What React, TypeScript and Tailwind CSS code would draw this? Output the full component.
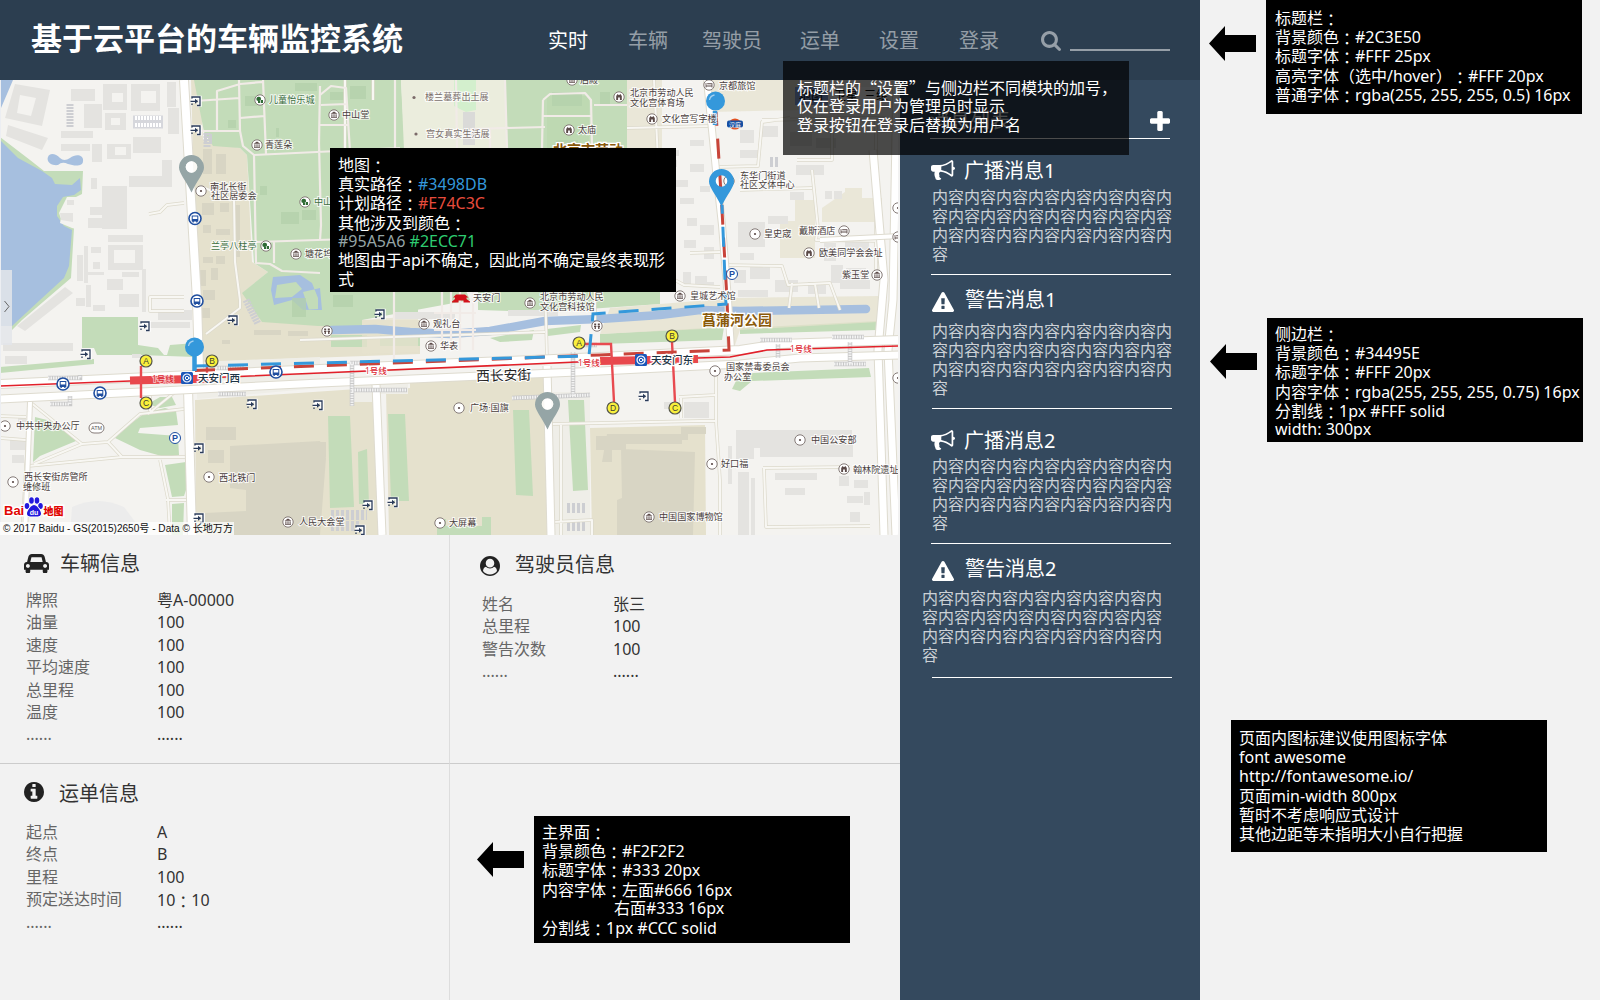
import React from "react";

/* Full-width punctuation keeps its whole cell; the colon sits centred in it */
function T({ children }: { children: string }) {
  return (
    <>
      {children.split(/([：（）“”])/).map((part, i) => {
        if (part === "：")
          return <span key={i} lang="zh-TW" className="inline-block w-[16px] translate-y-[1.5px] text-center font-['Noto_Sans_CJK_TC']">{part}</span>;
        if (/^[（）“”]$/.test(part))
          return <span key={i} lang="zh-CN" className="inline-block w-[16px] font-['Noto_Sans_CJK_SC']">{part}</span>;
        return part;
      })}
    </>
  );
}

const ICONS = {
  bullhorn:
    "M1664 640q53 0 90.5 37.5t37.5 90.5-37.5 90.5-90.5 37.5v384q0 52-38 90t-90 38q-417-347-812-380-58 19-91 66t-31 100.5 40 92.5q-20 33-23 65.5t6 58 33.5 55 48 50 61.5 50.5q-29 58-111.5 83t-168.5 11.5-132-55.5q-7-23-29.5-87.5t-32-94.5-23-89-15-101 3.5-98.5 22-110.5h-122q-66 0-113-47t-47-113v-192q0-66 47-113t113-47h480q435 0 896-384 52 0 90 38t38 90v384zm-128 604v-954q-394 302-768 343v270q377 42 768 341z",
  search:
    "M1216 832q0-185-131.5-316.5t-316.5-131.5-316.5 131.5-131.5 316.5 131.5 316.5 316.5 131.5 316.5-131.5 131.5-316.5zm512 832q0 52-38 90t-90 38q-54 0-90-38l-343-342q-179 124-399 124-143 0-273.5-55.5t-225-150-150-225-55.5-273.5 55.5-273.5 150-225 225-150 273.5-55.5 273.5 55.5 225 150 150 225 55.5 273.5q0 220-124 399l343 343q37 37 37 90z",
  plus:
    "M1600 736v192q0 40-28 68t-68 28h-416v416q0 40-28 68t-68 28h-192q-40 0-68-28t-28-68v-416h-416q-40 0-68-28t-28-68v-192q0-40 28-68t68-28h416v-416q0-40 28-68t68-28h192q40 0 68 28t28 68v416h416q40 0 68 28t28 68z",
  warning:
    "M1024 1375v-190q0-14-9.5-23.5t-22.5-9.5h-192q-13 0-22.5 9.5t-9.5 23.5v190q0 14 9.5 23.5t22.5 9.5h192q13 0 22.5-9.5t9.5-23.5zm-2-374l18-459q0-12-10-19-13-11-24-11h-220q-11 0-24 11-10 7-10 21l17 457q0 10 10 16.5t24 6.5h185q14 0 23.5-6.5t10.5-16.5zm-14-934l768 1408q35 63-2 126-17 29-46.5 46t-63.5 17h-1536q-34 0-63.5-17t-46.5-46q-37-63-2-126l768-1408q17-31 47-49t65-18 65 18 47 49z",
  info:
    "M1152 1376v-160q0-14-9-23t-23-9h-96v-512q0-14-9-23t-23-9h-320q-14 0-23 9t-9 23v160q0 14 9 23t23 9h96v320h-96q-14 0-23 9t-9 23v160q0 14 9 23t23 9h448q14 0 23-9t9-23zm-128-896v-160q0-14-9-23t-23-9h-192q-14 0-23 9t-9 23v160q0 14 9 23t23 9h192q14 0 23-9t9-23zm640 416q0 209-103 385.5t-279.5 279.5-385.5 103-385.5-103-279.5-279.5-103-385.5 103-385.5 279.5-279.5 385.5-103 385.5 103 279.5 279.5 103 385.5z",
  car:
    "M480 1088q0-66-47-113t-113-47-113 47-47 113 47 113 113 47 113-47 47-113zm36-320h1016l-89-357q-2-8-14-17.5t-21-9.5h-768q-9 0-21 9.5t-14 17.5zm1372 320q0-66-47-113t-113-47-113 47-47 113 47 113 113 47 113-47 47-113zm160-96v384q0 14-9 23t-23 9h-96v128q0 80-56 136t-136 56-136-56-56-136v-128h-1024v128q0 80-56 136t-136 56-136-56-56-136v-128h-96q-14 0-23-9t-9-23v-384q0-93 65.5-158.5t158.5-65.5h28l105-419q23-94 104-157.5t179-63.5h768q98 0 179 63.5t104 157.5l105 419h28q93 0 158.5 65.5t65.5 158.5z",
  user:
    "M1523 1339q-22-155-87.5-257.5t-184.5-118.5q-67 74-159.5 115.5t-195.5 41.5-195.5-41.5-159.5-115.5q-119 16-184.5 118.5t-87.5 257.5q106 150 271 237.5t356 87.5 356-87.5 271-237.5zm-243-699q0-159-112.5-271.5t-271.5-112.5-271.5 112.5-112.5 271.5 112.5 271.5 271.5 112.5 271.5-112.5 112.5-271.5zm512 256q0 182-71 347.5t-190.5 286-285.5 191.5-349 71q-182 0-348-71t-286-191-191-286-71-348 71-348 191-286 286-191 348-71 348 71 286 191 191 286 71 348z",
};

function Icon({ d, box, className }: { d: string; box: string; className: string }) {
  return (
    <svg viewBox={box} preserveAspectRatio="none" fill="currentColor" className={className}>
      <path d={d} />
    </svg>
  );
}

/* ---------- map ---------- */

const BUILDINGS =
  "M15 84L50 90L42 126L5 118ZM8 125L48 138L42 150L6 136ZM71 89h24v12h-24ZM84 104h18v24h-18ZM61 131h32v7h-32ZM61 144h29v7h-29ZM92 144h10v18h-10ZM103 84h24v26h-24ZM131 84h29v27h-29ZM105 113h21v17h-21ZM133 137h28v16h-28ZM107 144h24v15h-24ZM167 82h9v25h-9ZM168 108h11v26h-11ZM162 160h10v27h-43v-11h33ZM91 178h6v11h-6ZM102 186h25v43h-25ZM90 207h12v8h-12ZM88 218h14v10h-14ZM108 235h35v7h-35ZM108 245h35v25h-35ZM77 255h6v26h-6ZM84 246h4v37h-4ZM91 247h10v6h-10ZM93 262h7v7h-7ZM88 272h16v3h-16ZM107 279h16v11h-16ZM122 272h17v5h-17ZM119 294h20v13h-20ZM142 269h4v43h-4ZM65 287l8 6-48 38-8-5ZM76 298h9v8h-9ZM86 285h5v22h-5ZM93 305h12v6h-12ZM145 322h45v6h-45ZM158 310h34v10h-34ZM3 343h70v8h-70ZM5 356h22v8h-22ZM132 354h9v4h-9ZM18 416h8v13h-8ZM10 440h16v10h-16ZM12 455h12v8h-12ZM635 165h10v7h-10ZM665 150h14v6h-14ZM690 140h14v6h-14ZM668 160h9v7h-9ZM690 164h14v8h-14ZM672 180h16v7h-16ZM680 198h14v6h-14ZM700 186h10v6h-10ZM687 218h10v8h-10ZM700 225h14v10h-14ZM684 240h12v8h-12ZM704 247h10v12h-10ZM683 272h8v13h-8ZM695 276h12v11h-12ZM740 130h14v13h-14ZM760 126h18v11h-18ZM740 150h20v8h-20ZM790 132h22v14h-22ZM816 138h20v10h-20ZM796 165h28v10h-28ZM738 222h27v25h-27ZM768 216h20v8h-20ZM740 253h14v7h-14ZM790 192h14v8h-14ZM825 191h7v8h-7ZM834 191h8v8h-8ZM734 270h12v13h-12ZM750 266h20v13h-20ZM738 290h30v7h-30ZM824 243h12v18h-12ZM845 242h24v12h-24ZM831 265h12v18h-12ZM846 268h20v16h-20ZM736 430h116v12h-30v15h-62v-9h-6v11h-18ZM822 442h31v15h-31ZM728 446h4v38h-4ZM738 472h11v63h-11ZM751 478h4v57h-4ZM775 473h42v7h-42ZM785 488h20v7h-20ZM839 476h10v10h-10ZM854 480h14v8h-14ZM847 496h16v7h-16ZM864 492h6v13h-6ZM850 512h10v10h-10ZM684 402h25v16h-25ZM664 402h8v7h-8ZM700 282h14v5h-14ZM775 280h23v12h-23ZM808 282h18v12h-18ZM840 280h30v9h-30ZM508 310h50v6h-50ZM395 312h60v7h-60Z";

const PARK_BUILDINGS =
  "M245 96h12v10h-12ZM295 83h22v8h-22ZM228 120h8v8h-8ZM350 86h16v13h-16ZM330 92h14v8h-14ZM260 186h7v9h-7ZM281 212h18v12h-18ZM302 210h14v10h-14ZM276 128h3v9h-3ZM552 92h30v14h-30ZM556 140h22v8h-22ZM600 92h10v14h-10ZM292 298h14v19h-14ZM333 295h20v12h-20Z";

const TAN_BUILDINGS =
  "M203 149h9v25h-9ZM216 154h10v20h-10ZM202 203h12v12h-12ZM220 203h9v9h-9ZM234 205h6v52h-6ZM203 225h8v8h-8ZM216 229h14v6h-14ZM203 257h10v6h-10ZM216 256h9v8h-9ZM200 270h6v16h-6ZM211 268h7v12h-7ZM203 290h12v10h-12ZM202 308h8v10h-8ZM222 340h8v4h-8ZM254 330h27v5h-27ZM288 331h20v5h-20ZM206 427h30v13h-30ZM230 446L320 441L326 458L320 535L205 535L205 513L246 511L246 490L230 488ZM208 450h16v13h-16ZM300 442h26v15h-9v78h-17ZM607 434h75v10h-70v18h-10ZM621 449L695 452L693 535L617 535L617 500L622 498ZM681 427h25v7h-18v6h-7ZM596 436h30v14h-30Z";

const MINOR_ROADS =
  "M0 401L30 399L31 402L26 465L22 535M30 402L82 444L108 442L140 414L184 409M108 442L122 457L185 457M122 457L28 466M82 444L34 464M148 414L180 388M150 395L150 411M0 416L26 417M0 438L26 440M160 460L168 499L170 535M166 500L186 500M184 203L167 205L160 212L149 214M184 297L150 297L150 311L184 311M206 334L240 308L240 300L235 262L234 200L200 186M373 100L373 80M345 80L345 200M300 340L545 332M545 280L547 360M595 280L595 320M552 424L700 421L716 421M561 424L561 535M716 376L716 421M679 397L715 395M681 397L681 418M716 421L720 480L720 535M763 468L850 467M764 468L766 527L870 526M553 522L592 520L592 535M762 120L770 120L850 118L886 118M716 167L758 166L762 122L790 118M740 190L812 188M812 170L818 228L816 240L882 241M797 160L832 160L832 122M690 253L720 252M725 265L782 266L788 285L830 283L840 310M792 283L789 308M815 284L819 308M673 279L684 285L720 287M627 128L710 126M654 80L662 240M876 120L876 280M900 120L900 350";

const PARK_PATHS =
  "M195 101L240 98M217 131L217 91L240 84L262 82M239 80L240 131M195 131L240 131L243 146L254 155L256 263L270 264L282 271L320 273M263 80L266 154M240 118L265 116M254 155L400 148M320 95L331 86L346 88L350 152M320 86L319 143L321 225L320 240M321 105L347 104M319 125L348 125M395 80L395 150M274 242L274 263M256 242L380 238M470 129L545 127M505 80L507 148M543 100L550 94L585 93L591 100L592 148M543 116L592 116M543 100L542 148M456 80L457 148M490 130L490 148M594 105L627 105M394 290L394 365M442 292L442 350M451 292L451 350M460 292L460 350M473 292L473 350M434 313L476 313M434 330L476 330";

const STAIRS =
  "M48 378h32v-3M50 404h20v-8M218 394h28M216 368h28M350 363h30M350 390h0M352 364v42M352 390h55M575 345h22M512 398L590 395M573 352v44M760 340h32M832 337h32M834 364h32M778 344v14M850 342v22";

type P = [number, number, string, string?];
const LABELS: P[] = [
  [269, 100, "儿童怡乐城", "g"],
  [265, 145, "青莲朵"],
  [210, 187, "南北长街"],
  [211, 196, "社区居委会"],
  [211, 246, "兰亭八柱亭", "g"],
  [305, 254, "塘花坞"],
  [342, 115, "中山堂"],
  [314, 202, "中山音乐堂", "g"],
  [425, 97, "楼兰墓葬出土展", "s"],
  [426, 134, "宫女真实生活展", "s"],
  [578, 130, "太庙"],
  [580, 80, "后殿"],
  [630, 93, "北京市劳动人民"],
  [630, 103, "文化宫体育场"],
  [662, 119, "文化宫写字楼"],
  [719, 85.5, "京都旅馆"],
  [740, 176, "东华门街道"],
  [740, 185, "社区文体中心"],
  [764, 234, "皇史宬"],
  [799, 231, "戴斯酒店"],
  [819, 253, "欧美同学会会址"],
  [842, 275, "紫玉堂"],
  [690, 296, "皇城艺术馆"],
  [473, 298, "天安门"],
  [540, 297, "北京市劳动人民"],
  [540, 307, "文化宫科技馆"],
  [433, 324, "观礼台"],
  [440, 346, "华表"],
  [470, 408, "广场·国旗"],
  [449, 523, "大屏幕"],
  [299, 522, "人民大会堂"],
  [726, 367, "国家禁毒委员会"],
  [724, 377, "办公室"],
  [811, 440, "中国公安部"],
  [721, 464, "好口福"],
  [853, 470, "翰林院遗址"],
  [659, 517, "中国国家博物馆"],
  [16, 426, "中共中央办公厅"],
  [24, 477, "西长安街房管所"],
  [23, 487, "维修班"],
  [219, 478, "西北铁门"],
];

const POI: [number, number, string][] = [
  [260, 100, "tree"], [257, 145, "hall"], [201, 191, "dot"], [266, 246, "tree"], [296, 254, "hall"],
  [334, 115, "hall"], [305, 202, "tree"], [569, 130, "arch"], [572, 80, "hall"], [619, 97, "arch"],
  [652, 119, "arch"], [709, 85, "bed"], [729, 181, "dot"], [755, 234, "dot"], [844, 231, "bed"],
  [809, 253, "arch"], [877, 275, "hall"], [680, 296, "hall"], [530, 303, "hall"], [424, 324, "hall"],
  [431, 346, "hall"], [327, 331, "wc"], [597, 326, "wc"], [459, 408, "dot"], [440, 523, "dot"],
  [288, 522, "hall"], [715, 371, "dot"], [800, 440, "dot"], [712, 464, "dot"], [844, 469, "arch"],
  [649, 517, "hall"], [5, 426, "dot"], [13, 482, "dot"], [209, 477, "dot"], [898, 208, "dot"],
  [898, 237, "bed"], [898, 378, "dot"],
];

const GLYPH: Record<string, string> = {
  tree: "M-1 -3.2A2 2 0 1 1 -1 1H0.3V3H-2V1A2 2 0 0 1 -1 -3.2ZM1 3V0H3V3Z",
  hall: "M0 -3.4L3.4 -1.2H-3.4ZM-2.6 -0.8H-1.6V2H-2.6ZM-0.5 -0.8H0.5V2H-0.5ZM1.6 -0.8H2.6V2H1.6ZM-3 2.2H3V3H-3Z",
  dot: "M-1.1 0A1.1 1.1 0 1 0 1.1 0A1.1 1.1 0 1 0 -1.1 0Z",
  arch: "M-2.8 3V-1L-1.4 -3L0 -1.8L1.4 -3L2.8 -1V3H0.9V0.6H-0.9V3Z",
  bed: "M-3.4 -2H-2.6V0.4H2.6V-0.8H-1.8V-1.8H3.4V2.4H2.6V1.4H-2.6V2.4H-3.4Z",
  wc: "M-2.8 -2.6H-0.8V-0.6H-2.8ZM-3 0H-0.6V1H-1.1V3H-2.4V1H-3ZM0.8 -2.6H2.8V-0.6H0.8ZM0.6 0H3V1H2.5V3H1.1V1H0.6Z",
};

const BUS: [number, number][] = [[195, 218.5], [197, 301], [63, 384], [100, 393], [276, 372]];
const EXITS: [number, number][] = [
  [196, 101], [196, 130], [145, 326], [233, 320], [86, 354], [252, 404], [318, 405], [199, 448],
  [199, 518], [380, 314], [368, 505], [393, 502], [360, 530], [644, 396],
];
const GATES: [number, number, string][] = [
  [146, 361, "A"], [212, 361, "B"], [146, 403, "C"], [579, 343, "A"], [613, 408, "D"], [672, 336, "B"], [675, 408, "C"],
];

const PIN = "M0 -12.5A12.5 12.5 0 0 0 -12.5 0C-12.5 6 -6 12 0 25C6 12 12.5 6 12.5 0A12.5 12.5 0 0 0 0 -12.5ZM0 -6.3A5.8 5.8 0 1 1 0 5.3A5.8 5.8 0 1 1 0 -6.3Z";

function MapView() {
  return (
    <svg viewBox="0 80 900 455" className="block h-[455px] w-[900px] font-['Open_Sans','Noto_Sans_CJK_SC',sans-serif]">
      <rect x="0" y="80" width="900" height="455" fill="#f4f3f0" />
      {/* parks */}
      <path fill="#c3dcb9" d="M0 137L30 160L44 171H83L82 194L76 197H67L59 213L62 222L74 228L71 278L22 320L12 330V200Z" />
      <path fill="#a6bfdf" d="M1 80H13L1 108ZM0 140L18 158L42 171L52 178L55 184L72 185L80 178L81 190L74 195L63 197L57 206L57 216L64 226L72 230L69 266L64 278L40 300L12 326H0ZM48 157C50 152 56 154 60 158Q64 162 70 158C76 153 84 155 83 161C83 167 74 166 68 164Q62 161 58 165C52 166 46 162 48 157Z" />
      <path fill="#f4f3f0" d="M68 197h12v33l-8-2-12-5 2-10 7 1Z" />
      <path fill="#e4e3e0" d="M67 200h7v5h-7ZM60 213h13v9l-12-2Z" />
      <path fill="#e5e1cd" d="M191 80H200L203 140L240 148L247 155L252 262L268 272L244 292L262 320L420 320V354L203 362L197 300Z" />
      <path fill="#c3dcb9" d="M194 80H401L405 150L470 300L362 320V326H318L262 322L242 293L268 272L254 263L247 155L240 148L213 146L204 132Z" />
      <path fill="#ebeddd" d="M401 80H507V150H404Z" />
      <path fill="#d3efcd" d="M454 80H476V110L466 112L454 106Z" />
      <path fill="#dadad8" d="M463 112h12v33h-12Z" />
      <path fill="#c3dcb9" d="M505 80H627V160H507ZM373 292H418V312H373ZM478 292H660V304L545 312L478 310ZM331 335H367V347H331ZM380 335L420 337V346H380ZM490 338L534 330L532 340L500 342ZM547 329L581 325L580 332L548 336ZM600 334L724 327L722 340L600 344ZM740 328L877 321V330L740 334Z" />
      <path fill="#e5e1cd" d="M627 80H662V150H627ZM780 221H795V200H815V258H780ZM822 208L845 192V188H862V198H882V222H822ZM706 80h94v30l-90 2Z" opacity=".7" />
      <path fill="#e5e1cd" d="M362 320L418 316V352L362 354ZM610 308L735 298L878 296V322L740 330L735 345H728L726 328L600 334Z" opacity=".75" />
      <path fill="#b4d4a7" d="M547 96H589V148H547Z" opacity=".35" />
      {/* river and lake */}
      <path fill="none" stroke="#a6bfdf" strokeWidth="8.5" strokeLinecap="round" strokeLinejoin="round" d="M332 330L375 329L410 332L450 334L490 331L545 321L600 319L660 315L700 310L740 311L866 309" />
      <path fill="#a6bfdf" fillRule="evenodd" d="M273 277L300 275L312 283L318 298V309L303 310L292 300L274 305L271 290ZM277 285L275 298L292 297L302 289L296 282ZM303 292L320 288L322 310H309Z" />
      {/* southern squares */}
      <path fill="#e5e1cd" d="M195 400L372 388L380 535H196ZM386 390L410 388L410 382L545 376L547 535H389ZM590 428L705 425L706 535H592Z" />
      <path fill="#efeee8" d="M350 384H408V394H372V402H350ZM545 392H590V535H554ZM197 362L320 357V388L197 399Z" />
      <path fill="#c3dcb9" d="M82 317H138V345L158 348L164 355H167L170 345L195 343V357L140 355L97 355L94 348H82ZM0 367L94 359V364L0 373ZM35 417L55 422L76 441L40 456L33 462ZM115 438L130 424L145 413L165 408L176 411L178 425L140 428L138 433L178 436L179 455L165 457L140 450ZM148 404L160 397H172L176 405L160 408ZM165 465L186 462V490L184 496L172 497ZM172 504L184 503L183 535H172ZM328 416L350 416L354 507L330 508ZM358 452L367 449L369 504H359ZM388 414H405L409 501H391ZM513 410H529L533 496L516 495ZM568 400L584 400L588 490L573 491ZM437 519H446V526H482V517H491V535H437ZM753 373L869 368L871 377L752 381L740 391L732 389L736 381Z" />
      <path fill="#ececec" d="M72 507Q98 495 124 507L145 535H70Z" />
      <path fill="#e4e3e0" d={BUILDINGS} />
      <path fill="#b3d0ab" opacity=".75" d={PARK_BUILDINGS} />
      <path fill="#d8d5c4" d={TAN_BUILDINGS} />
      <path fill="#f4f3f0" d="M112 93h11v9h-11ZM141 91h15v12h-15ZM111 118h9v7h-9ZM115 147h11v8h-11ZM114 250h21v13h-21ZM20 95l16 3-5 18-14-3Z" />
      {/* parking lots */}
      <g fill="none" stroke="#cdced2">
        <path strokeWidth="13" stroke="#d6d7dc" d="M133 122h30" />
        <path strokeWidth="4" stroke="#fff" strokeDasharray="2 1" d="M135 118h27M135 125h27" />
        <path strokeWidth="7" strokeDasharray="2 1" d="M70 104v24M207 133v14M246 300l12 24" />
        <path strokeWidth="10" strokeDasharray="3 2" d="M331 515h36M331 526h30M567 508h20M567 526h20M204 139h9M770 162h10" />
      </g>
      {/* minor roads */}
      <path fill="none" stroke="#dcd9cb" strokeWidth="3.4" strokeLinejoin="round" d={MINOR_ROADS} />
      <path fill="none" stroke="#f8f7f3" strokeWidth="2" strokeLinejoin="round" d={MINOR_ROADS} />
      <path fill="none" stroke="#f1ebe7" strokeWidth="2.2" strokeLinejoin="round" d={PARK_PATHS} />
      {/* main roads */}
      {[
        ["M184 80L197 300L199 368", 8],
        ["M188 388L192 535", 8],
        ["M30 402L25 535", 4],
        ["M376 384L382 535", 7],
        ["M547 366L551 535", 7],
        ["M707 80L716 170L722 225L728 300L731 350", 6],
        ["M873 150L884 280L878 350L884 535", 7],
        ["M897 80L893 300L888 350L896 535", 7],
        ["M820 240L900 236", 4],
        ["M0 384L320 369L600 357L740 350L780 344L900 340", 8],
        ["M0 399L320 383L600 371L740 364L800 358L900 355", 7],
      ].map(([d, w], i) => (
        <g key={i} fill="none" strokeLinejoin="round">
          <path d={d as string} stroke="#dedbcf" strokeWidth={(w as number) + 2} />
          <path d={d as string} stroke="#ffffff" strokeWidth={w as number} />
        </g>
      ))}
      <path fill="none" stroke="#c9c9c9" strokeWidth="4.5" d={STAIRS} />
      <path fill="none" stroke="#f2f2f2" strokeWidth="3" strokeDasharray="1.5 1" d={STAIRS} />
      {/* metro line 1 */}
      <path fill="none" stroke="#e2202a" strokeWidth="1.6" d="M0 386L130 381L320 373L600 361L730 357L767 350L898 346" />
      <path fill="none" stroke="#e8484d" strokeWidth="8" d="M130 380.500L214 378.500M600 361L698 359" />
      <path fill="none" stroke="#e84a50" strokeWidth="2.4" d="M141 366V398M207 366V376M585 344H611L614 402M672 342L675 402" />
      {/* planned and driven routes */}
      <path fill="none" stroke="#c8443a" strokeWidth="3" strokeDasharray="20 13" d="M195 370.500L600 355L729 350L727 300L722 210L716 112" />
      <path fill="none" stroke="#3498db" strokeWidth="3" strokeDasharray="20 13" d="M195 366L589 356L593 314L726 304L725 280L722 205" />
      <path fill="none" stroke="#3498db" strokeWidth="4.500" d="M194.500 356V371M715 111V125" />

      {EXITS.map(([x, y], i) => (
        <g key={i} transform={`translate(${x} ${y})`}>
          <path fill="none" stroke="#fff" strokeWidth="3.500" d="M-4 -3.500H4V4H1M-5 0H1" />
          <path fill="none" stroke="#2a3b5a" strokeWidth="1.300" d="M-4 -2.500V-4H4V4.500H1M-4 2.500V4M-5.500 0.300H1" />
          <path fill="#2a3b5a" d="M-1 -2.200L2.200 0.300L-1 2.800Z" />
        </g>
      ))}
      {BUS.map(([x, y], i) => (
        <g key={i} transform={`translate(${x} ${y})`}>
          <circle r="6" fill="#fff" stroke="#1f4e9f" strokeWidth="1.600" />
          <path fill="#1f4e9f" fillRule="evenodd" d="M-3.300 -3H3.300V3H2.500V4H1.200V3H-1.200V4H-2.500V3H-3.300ZM-2.300 -2V0.500H2.300V-2Z" />
        </g>
      ))}
      {POI.map(([x, y, k], i) => (
        <g key={i} transform={`translate(${x} ${y})`}>
          <circle r="5.200" fill="#fff" stroke="#857b78" strokeWidth="1" />
          <path fill={k === "tree" ? "#2f6b35" : "#5b4a48"} d={GLYPH[k]} />
        </g>
      ))}
      <circle cx="414" cy="97.500" r="1.600" fill="#7b6a69" />
      <circle cx="416" cy="134" r="1.600" fill="#7b6a69" />
      {LABELS.map(([x, y, s, k], i) => (
        <text
          key={i}
          x={x}
          y={y + 3.4}
          fontSize="9.100"
          stroke="#fff"
          strokeOpacity=".8"
          strokeWidth="2"
          paintOrder="stroke"
          fill={k === "g" ? "#3c6e42" : k === "s" ? "#7b6f6c" : "#4a3f3e"}
        >
          {s}
        </text>
      ))}
      <g fontWeight="700" stroke="#fff" strokeWidth="2.500" paintOrder="stroke">
        <text x="553" y="155" fontSize="14" fill="#8a5a0c">北京市劳动</text>
        <text x="702" y="325" fontSize="14" fill="#8a5a0c">菖蒲河公园</text>
      </g>
      <text x="476" y="381" fontSize="13.800" fill="#222" stroke="#fff" strokeWidth="2" paintOrder="stroke" transform="rotate(-1.500 476 376)">西长安街</text>
      <g fontSize="10.500" fill="#1d3446" stroke="#fff" strokeWidth="2.500" paintOrder="stroke" fontWeight="500">
        <text x="198" y="382">天安门西</text>
        <text x="651" y="364">天安门东</text>
      </g>
      <g fontSize="8.500" fill="#dc2430" stroke="#fff" strokeWidth="2" paintOrder="stroke" fontWeight="500">
        <text x="152" y="382" strokeOpacity=".6">1号线</text>
        <text x="365" y="374">1号线</text>
        <text x="578" y="366">1号线</text>
        <text x="790" y="351.500">1号线</text>
      </g>
      {[[187, 378], [641, 360]].map(([x, y]) => (
        <g key={x} transform={`translate(${x} ${y})`}>
          <rect x="-6" y="-6" width="12" height="12" rx="1.500" fill="#1c57b8" />
          <circle r="4" fill="none" stroke="#fff" strokeWidth="1.200" />
          <circle r="1.700" fill="none" stroke="#fff" strokeWidth="1" />
          <path d="M1 0H4" stroke="#fff" />
        </g>
      ))}
      {GATES.map(([x, y, s], i) => (
        <g key={i}>
          <circle cx={x} cy={y} r="6" fill="#f9f03c" stroke="#55564a" strokeWidth="1.200" />
          <text x={x} y={y + 3} fontSize="8.500" textAnchor="middle" fill="#3d3d30" className="font-['Liberation_Sans']">{s}</text>
        </g>
      ))}
      {[[175, 438], [732, 274]].map(([x, y]) => (
        <g key={x}>
          <circle cx={x} cy={y} r="5.500" fill="#fff" stroke="#1f4e9f" />
          <text x={x} y={y + 3.200} fontSize="9" fontWeight="700" textAnchor="middle" fill="#1f4e9f" className="font-['Liberation_Sans']">P</text>
        </g>
      ))}
      <rect x="89" y="423" width="15" height="10" rx="5" fill="#fff" stroke="#857b78" />
      <text x="96.500" y="430.300" fontSize="5.500" textAnchor="middle" fill="#555" className="font-['Liberation_Sans']">ATM</text>
      {/* Tiananmen gate */}
      <path fill="#d3121b" d="M456 294.500H465L468.500 297.500H466.500V299L470 301.500V302.500H463.500V300.500H458.500V302.500H452V301.500L455 299V297.500H453Z" />
      {/* hotel brand badge */}
      <ellipse cx="735" cy="124" rx="6" ry="5.500" fill="#e2501f" />
      <rect x="727" y="120.500" width="16" height="7" rx="2" fill="#164fa3" />
      <text x="735" y="126.500" fontSize="6" textAnchor="middle" fill="#fff">汉庭</text>
      {/* pins */}
      <path transform="translate(191.500 167.500)" fill="#95a5a6" fillRule="evenodd" d={PIN} />
      <path transform="translate(547.500 404.500)" fill="#95a5a6" fillRule="evenodd" d={PIN} />
      <circle cx="191.500" cy="167" r="5.800" fill="#fff" opacity=".8" />
      <circle cx="547.500" cy="404" r="5.800" fill="#fff" opacity=".8" />
      <path transform="translate(721.500 181.500)" fill="#3498db" fillRule="evenodd" d={PIN} />
      {[[194.5, 347], [715.5, 101]].map(([x, y]) => (
        <g key={x}>
          <circle cx={x} cy={y} r="9.500" fill="#3498db" />
          <path fill="none" stroke="#a5d0ef" strokeWidth="1.300" d={`M${x - 6} ${y - 1}A6 6 0 0 1 ${x - 1} ${y - 6}`} />
        </g>
      ))}
      {/* map type switch */}
      <rect x="795" y="87" width="33" height="18" fill="#8ea8e0" />
      <rect x="828" y="87" width="60" height="18" fill="#fff" />
      <g fontSize="12" fill="#000"><text x="799" y="100">地图</text><text x="834" y="100">卫星</text><text x="864" y="100">三维</text></g>
      {/* collapse handle */}
      <rect x="0" y="270" width="12" height="75" fill="#e3e5ea" opacity=".85" />
      <path d="M4.500 301L9 306.500L4.500 312" fill="none" stroke="#666" />
      <rect x="0" y="80" width="1" height="455" fill="#eceef2" />
      <rect x="898" y="80" width="2" height="455" fill="#f2f2f2" />
      {/* provider logo and copyright */}
      <rect x="0" y="522" width="234" height="13" fill="#fff" opacity=".75" />
      <g fontWeight="700" stroke="#fff" strokeWidth="3" paintOrder="stroke">
        <text x="4" y="515" fontSize="13" fill="#e10602" className="font-['Liberation_Sans']">Bai</text>
        <text x="43.500" y="515" fontSize="10" fill="#e10602" fontWeight="900">地图</text>
      </g>
      <g fill="#2319dc" stroke="#fff" strokeWidth="1.500" paintOrder="stroke">
        <ellipse cx="27" cy="506" rx="2.300" ry="3" />
        <ellipse cx="31.500" cy="500.500" rx="2.300" ry="3.200" />
        <ellipse cx="37" cy="500.500" rx="2.300" ry="3.200" />
        <ellipse cx="40.500" cy="506" rx="2.300" ry="3" />
        <path d="M34 505C37 505 41 511 41 513.500C41 517 37 516.500 34 516.500S27 517 27 513.500C27 511 31 505 34 505Z" />
      </g>
      <text x="34" y="515" fontSize="7" fontWeight="700" textAnchor="middle" fill="#fff" className="font-['Liberation_Sans']">du</text>
      <text x="3" y="532" fontSize="10" textLength="230" lengthAdjust="spacingAndGlyphs" fill="#111" className="font-['Liberation_Sans','Noto_Sans_CJK_SC']">
        © 2017 Baidu - GS(2015)2650号 - Data © 长地万方
      </text>
    </svg>
  );
}

/* ---------- page parts ---------- */

function Note({ lines, className }: { lines: React.ReactNode[]; className: string }) {
  return (
    <div className={`text-[16px] leading-[19.2px] whitespace-pre text-white ${className}`}>
      {lines.map((l, i) => (
        <div key={i} className="h-[19.2px]">{typeof l === "string" ? <T>{l}</T> : l}</div>
      ))}
    </div>
  );
}

function Arrow({ className }: { className: string }) {
  return (
    <svg viewBox="0 0 47 35" className={`h-[35px] w-[47px] shrink-0 ${className}`}>
      <path d="M0 17.500L16 0V9H47V26H16V35Z" fill="#000" />
    </svg>
  );
}

function Message({ kind, title, size, gap, shift }: { kind: "cast" | "warn"; title: string; size: string; gap: string; shift?: boolean }) {
  const warn = kind === "warn";
  return (
    <section className={`w-[240px] border-b border-white ${warn ? "ml-[32px] pt-[13px]" : "ml-[31px] pt-[20px]"} ${size}`}>
      <div className={`flex h-[24px] items-center text-[20px] leading-[24px] text-white ${gap}`}>
        {warn ? (
          <Icon d={ICONS.warning} box="0 0 1792 1664" className="mt-[3px] mr-[11px] h-[20px] w-[22px]" />
        ) : (
          <Icon d={ICONS.bullhorn} box="0 128 1792 1536" className="mt-[-2px] mr-[9px] h-[20px] w-[24px]" />
        )}
        <h3>{title}</h3>
      </div>
      <p className={`w-[241px] text-[16px] leading-[19.1px] break-all text-white/75 ${shift ? "ml-[-10px]" : warn ? "" : "ml-px"}`}>
        {"内容".repeat(23)}
      </p>
    </section>
  );
}

function Rows({ rows, className }: { rows: [string, string][]; className: string }) {
  return (
    <dl className={`text-[16px] leading-[22.4px] ${className}`}>
      {rows.map(([k, v], i) => (
        <div key={i} className="flex h-[22.4px]">
          <dt className="w-[131px] text-[#666]">{k}</dt>
          <dd className="text-[#333]"><T>{v}</T></dd>
        </div>
      ))}
    </dl>
  );
}

export default function App() {
  return (
    <div className="relative flex h-[1000px] w-[1600px] overflow-hidden bg-[#f2f2f2] font-['Noto_Sans','Noto_Sans_CJK_SC',sans-serif]">
      <div className="w-[1200px] shrink-0">
        <header className="flex h-[80px] items-center bg-[#2c3e50] text-white">
          <h1 className="mt-[-4px] ml-[31px] w-[517px] text-[31px] leading-[40px] font-bold whitespace-nowrap">基于云平台的车辆监控系统</h1>
          <nav className="mt-[2px] flex text-[20px] leading-[28px] whitespace-nowrap text-white/50">
            <a className="w-[80px] text-white">实时</a>
            <a className="w-[74px]">车辆</a>
            <a className="w-[98px]">驾驶员</a>
            <a className="w-[79px]">运单</a>
            <a className="w-[80px]">设置</a>
            <a className="w-[82px]">登录</a>
          </nav>
          <Icon d={ICONS.search} box="64 128 1664 1664" className="mt-[2px] h-[20px] w-[20px] text-white/50" />
          <div className="mt-[20px] ml-[9px] h-[2px] w-[100px] bg-white/50" />
        </header>

        <div className="flex h-[920px]">
          <main className="w-[900px] shrink-0">
            <MapView />
            <div className="grid h-[465px] grid-cols-[450px_450px] grid-rows-[228px_237px]">
              <section className="border-r border-[#ddd] pt-[17px] pl-[24px]">
                <div className="flex h-[24px] items-center">
                  <Icon d={ICONS.car} box="0 128 2048 1536" className="mt-[-1px] h-[19px] w-[25px] text-[#222]" />
                  <h2 className="ml-[11px] text-[20px] leading-[24px] text-[#333]">车辆信息</h2>
                </div>
                <Rows
                  className="mt-[13px] ml-[2px]"
                  rows={[["牌照", "粤A-00000"], ["油量", "100"], ["速度", "100"], ["平均速度", "100"], ["总里程", "100"], ["温度", "100"], ["......", "......"]]}
                />
              </section>
              <section className="pt-[18px] pl-[30px]">
                <div className="flex h-[24px] items-center">
                  <Icon d={ICONS.user} box="0 0 1792 1792" className="mt-[2px] h-[20px] w-[20px] text-[#222]" />
                  <h2 className="ml-[15px] text-[20px] leading-[24px] text-[#333]">驾驶员信息</h2>
                </div>
                <Rows className="mt-[16px] ml-[2px]" rows={[["姓名", "张三"], ["总里程", "100"], ["警告次数", "100"], ["......", "......"]]} />
              </section>
              <section className="border-t border-r border-t-[#ccc] border-r-[#ddd] pt-[18px] pl-[24px]">
                <div className="flex h-[24px] items-center">
                  <Icon d={ICONS.info} box="128 128 1536 1536" className="mt-[-4px] h-[20px] w-[20px] text-[#222]" />
                  <h2 className="ml-[15px] text-[20px] leading-[24px] text-[#333]">运单信息</h2>
                </div>
                <Rows
                  className="mt-[15px] ml-[2px]"
                  rows={[["起点", "A"], ["终点", "B"], ["里程", "100"], ["预定送达时间", "10：10"], ["......", "......"]]}
                />
              </section>
              <section className="flex items-start border-t border-[#ccc] pt-[52px] pl-[27px]">
                <Arrow className="mt-[26px]" />
                <Note
                  className="ml-[10px] h-[127px] w-[316px] bg-black pt-[6px] pl-[8px]"
                  lines={["主界面：", "背景颜色：#F2F2F2", "标题字体：#333 20px", "内容字体：左面#666 16px", <span className="ml-[72px]">右面#333 16px</span>, "分割线：1px #CCC solid"]}
                />
              </section>
            </div>
          </main>

          <aside className="w-[300px] bg-[#34495e]">
            <div className="ml-[30px] flex h-[59px] w-[240px] items-center justify-between border-b border-white pt-[25px] pb-px text-white">
              <h2 className="text-[20px] leading-[24px]">消息列表</h2>
              <Icon d={ICONS.plus} box="192 128 1408 1408" className="h-[20px] w-[20px]" />
            </div>
            <Message kind="cast" title="广播消息1" size="h-[136px]" gap="mb-[5px]" />
            <Message kind="warn" title="警告消息1" size="h-[134px]" gap="mb-[10px]" />
            <Message kind="cast" title="广播消息2" size="h-[135px]" gap="mb-[4px]" />
            <Message kind="warn" title="警告消息2" size="h-[134px]" gap="mb-[8px]" shift />
          </aside>
        </div>
      </div>

      <div className="flex w-[400px] flex-col">
        <div className="flex items-start">
          <Arrow className="mt-[26px] ml-[9px]" />
          <Note
            className="ml-[10px] h-[114px] w-[316px] bg-black pt-[8px] pl-[9px]"
            lines={["标题栏：", "背景颜色：#2C3E50", "标题字体：#FFF 25px", "高亮字体（选中/hover）：#FFF 20px", "普通字体：rgba(255, 255, 255, 0.5) 16px"]}
          />
        </div>
        <div className="mt-[204px] flex items-start">
          <Arrow className="mt-[26px] ml-[10px]" />
          <Note
            className="ml-[10px] h-[124px] w-[316px] bg-black pt-[6px] pl-[8px]"
            lines={["侧边栏：", "背景颜色：#34495E", "标题字体：#FFF 20px", "内容字体：rgba(255, 255, 255, 0.75) 16px", "分割线：1px #FFF solid", "width: 300px"]}
          />
        </div>
        <Note
          className="mt-[278px] ml-[31px] h-[132px] w-[316px] bg-black pt-[9px] pl-[8px]"
          lines={["页面内图标建议使用图标字体", "font awesome", "http://fontawesome.io/", "页面min-width 800px", "暂时不考虑响应式设计", "其他边距等未指明大小自行把握"]}
        />
      </div>

      <Note
        className="absolute top-[148px] left-[330px] h-[144px] w-[346px] bg-black pt-[7px] pl-[8px]"
        lines={[
          "地图：",
          <><T>真实路径：</T><span className="text-[#3498db]">#3498DB</span></>,
          <><T>计划路径：</T><span className="text-[#e74c3c]">#E74C3C</span></>,
          "其他涉及到颜色：",
          <><span className="text-[#95a5a6]">#95A5A6</span> <span className="text-[#2ecc71]">#2ECC71</span></>,
          "地图由于api不确定，因此尚不确定最终表现形",
          "式",
        ]}
      />
      <Note
        className="absolute top-[61px] left-[783px] h-[94px] w-[346px] bg-black/70 pt-[17px] pl-[14px]"
        lines={["标题栏的“设置”与侧边栏不同模块的加号，", "仅在登录用户为管理员时显示", "登录按钮在登录后替换为用户名"]}
      />
    </div>
  );
}
